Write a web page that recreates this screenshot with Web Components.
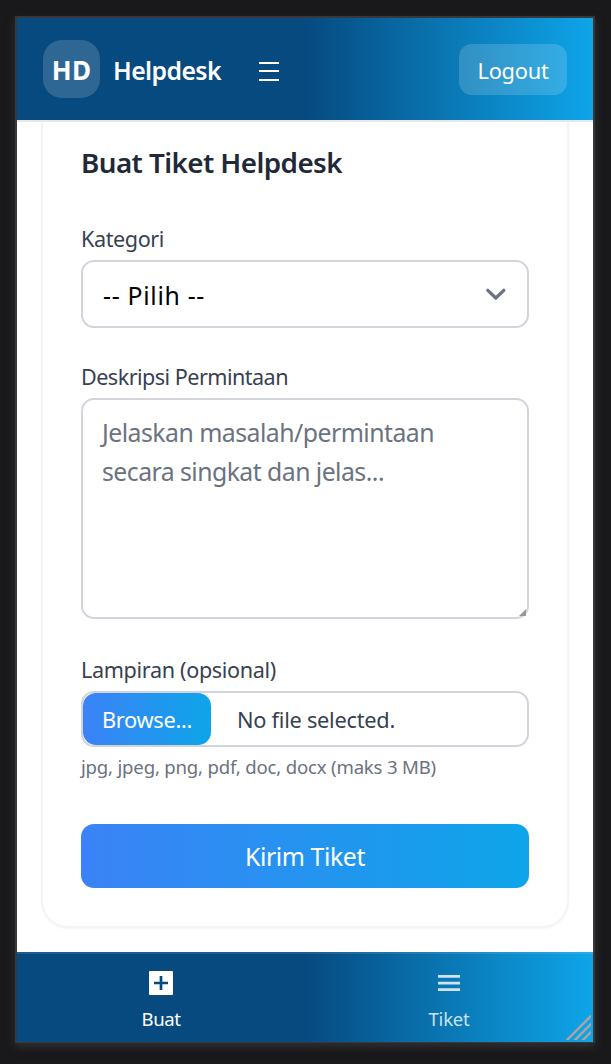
<!DOCTYPE html>
<html lang="id">
<head>
<meta charset="utf-8">
<title>Helpdesk</title>
<style>
html,body{margin:0;height:100%}
body{background:#19191b;font-family:"Noto Sans","Open Sans",sans-serif;overflow:hidden}
</style>
</head>
<body>
<device-frame>
  <app-header slot="top"></app-header>
  <ticket-form></ticket-form>
  <bottom-nav slot="bottom"></bottom-nav>
</device-frame>
<script>
const define = (name, html) => customElements.define(name, class extends HTMLElement {
  constructor() {
    super();
    this.attachShadow({mode: 'open'}).innerHTML = html;
  }
});

// A single line of text whose tracking is adjusted to fill a given width.
customElements.define('fit-text', class extends HTMLElement {
  constructor() {
    super();
    this.attachShadow({mode: 'open'}).innerHTML =
      '<style>:host{display:inline-block;white-space:nowrap}span{display:inline-block}</style><span><slot></slot></span>';
  }
  connectedCallback() {
    const span = this.shadowRoot.querySelector('span');
    const target = Number(this.getAttribute('width'));
    const n = this.textContent.length;
    const natural = span.getBoundingClientRect().width;
    span.style.letterSpacing = (target - natural) / n + 'px';
  }
});

define('device-frame', `<style>
:host{display:grid;grid-template-rows:104px 1fr 90px;box-sizing:border-box;width:580px;height:1027px;margin:16px 0 0 15px;border:2px solid #38383a;border-bottom-width:1px;background:#fff;box-shadow:0 4px 8px #303032;position:relative}
main{overflow:hidden;display:flex;flex-direction:column;justify-content:flex-end;padding:0 24px 24px}
svg{position:absolute;right:2px;bottom:2px}
</style><slot name="top"></slot><main><slot></slot></main><slot name="bottom"></slot>
<svg width="25" height="25" viewBox="0 0 25 25" fill="none" stroke="#a5a5a5" stroke-width="2.6"><path d="M0 26 26 0M8 26 26 8M16 26 26 16"/></svg>`);

define('app-header', `<style>
:host{display:flex;align-items:center;box-sizing:border-box;height:104px;padding:0 26px;border-bottom:2px solid #e5e7eb;color:#fff;background:linear-gradient(90deg,#064a80 50%,#0ea5e9) padding-box}
.logo{width:57px;height:58px;border-radius:19px;background:#ffffff29;display:grid;place-items:center;font-weight:700;font-size:26px;padding-top:1px;box-sizing:border-box}
.name{margin-left:13px;font-weight:600;font-size:24.8px;padding-top:2px}
svg{margin-left:38px;margin-top:5px}
.out{margin-left:auto;width:108px;height:51px;border-radius:13px;background:#ffffff29;display:grid;place-items:center;font-size:21.8px;padding-top:3px;box-sizing:border-box}
</style>
<div class="logo"><fit-text width="39.5">HD</fit-text></div>
<div class="name"><fit-text width="108">Helpdesk</fit-text></div>
<svg width="20" height="20" viewBox="0 0 20 20" fill="#fff"><path d="M0 0h20v2H0zM0 8h20v2H0zM0 17h20v2H0z"/></svg>
<div class="out"><fit-text width="71">Logout</fit-text></div>`);

define('form-field', `<style>
:host{display:block}
.label{font-size:21.6px;line-height:22px;height:32px;color:#374151}
.box{display:flex;box-sizing:border-box;border:2px solid #d1d5db;border-radius:13px;position:relative;height:var(--h)}
</style><div class="label"><slot name="label"></slot></div><div class="box"><slot></slot></div>`);

define('ticket-form', `<style>
:host{display:block;box-sizing:border-box;flex:none;height:900px;border:2px solid #f3f4f6;border-radius:27px;padding:0 38px;box-shadow:0 1px 2px #0000000a}
.stack{display:flex;flex-direction:column;height:100%;justify-content:flex-end;padding-bottom:38px;box-sizing:border-box}
h1{margin:0 0 45px;font-size:27.8px;font-weight:600;line-height:42px;height:42px;color:#1f2937}
.sel{flex:1;display:flex;align-items:center;justify-content:space-between;padding:2px 20px 0;font-size:24.8px;color:#000}
.sel svg{margin-top:-3px}
.area{flex:1;padding:13px 20px 0 19px;font-size:24.8px;line-height:39px;color:#6b7280;position:relative}
.area svg{position:absolute;right:0;bottom:0}
.browse{width:128px;height:52px;border-radius:13px;background:linear-gradient(90deg,#3b82f6,#0ea5e9);color:#fff;display:flex;align-items:center;padding-left:19px;box-sizing:border-box;font-size:21.8px}
.file{margin-left:26px;line-height:54px;font-size:21.8px;color:#374151}
.hint{font-size:18.6px;line-height:28px;height:28px;margin-top:6px;color:#6b7280}
.submit{margin-top:43px;height:64px;border-radius:13px;background:linear-gradient(90deg,#3b82f6,#0ea5e9);color:#fff;display:grid;place-items:center;font-size:24.8px;padding-bottom:1px;box-sizing:border-box}
</style><div class="stack">
<h1><fit-text width="261">Buat Tiket Helpdesk</fit-text></h1>
<form-field style="--h:68px"><fit-text slot="label" width="83">Kategori</fit-text>
<div class="sel"><fit-text width="102">-- Pilih --</fit-text><svg width="24" height="16" viewBox="0 0 24 16" fill="none" stroke="#6b7280" stroke-width="3.2" stroke-linecap="round" stroke-linejoin="round"><path d="m4.8 4.3 8 7.7 8-7.7"/></svg></div></form-field>
<form-field style="--h:221px;margin-top:38px"><fit-text slot="label" width="207">Deskripsi Permintaan</fit-text>
<div class="area"><fit-text width="332">Jelaskan masalah/permintaan</fit-text><br><fit-text width="282">secara singkat dan jelas...</fit-text><svg width="9" height="9" fill="#999"><path d="M8 1v7H1z"/></svg></div></form-field>
<form-field style="--h:56px;margin-top:40px"><fit-text slot="label" width="195">Lampiran (opsional)</fit-text>
<div class="browse"><fit-text width="90">Browse...</fit-text></div><div class="file"><fit-text width="158">No file selected.</fit-text></div></form-field>
<div class="hint"><fit-text width="355">jpg, jpeg, png, pdf, doc, docx (maks 3 MB)</fit-text></div>
<div class="submit"><fit-text width="120">Kirim Tiket</fit-text></div>
</div>`);

define('bottom-nav', `<style>
:host{display:grid;grid-template-columns:1fr 1fr;height:90px;box-sizing:border-box;border-top:2px solid #ffffff1a;color:#fff;background:linear-gradient(90deg,#064a80 50%,#0ea5e9) border-box;font-size:18.6px}
div{display:flex;flex-direction:column;align-items:center;padding-top:17px}
div+div{color:#ffffffcc}
fit-text{line-height:28px;margin-top:10px}
</style>
<div><svg width="24" height="24" viewBox="0 0 24 24"><rect width="24" height="24" rx="1" fill="#fff"/><path d="M5 12h14M12 5v14" stroke="#064a80" stroke-width="2.7"/></svg><fit-text width="39">Buat</fit-text></div>
<div><svg width="24" height="24" viewBox="0 0 24 24" fill="currentColor"><path d="M1 4h22v2.7H1zM1 10.7h22v2.7H1zM1 17.3h22V20H1z"/></svg><fit-text width="41">Tiket</fit-text></div>`);
</script>
</body>
</html>
